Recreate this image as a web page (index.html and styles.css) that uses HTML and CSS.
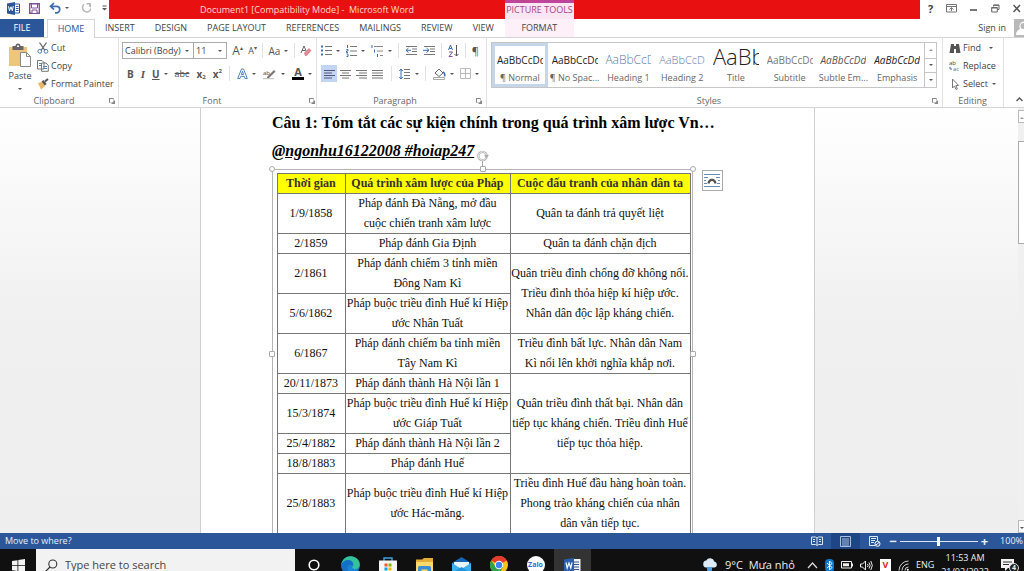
FILE: index.html
```html
<!DOCTYPE html>
<html lang="vi">
<head>
<meta charset="utf-8">
<title>Document1 [Compatibility Mode] - Microsoft Word</title>
<link rel="stylesheet" href="styles.css">
</head>
<body>
<header class="titlebar">
  <div class="quick">
    <svg class="word-logo" width="13" height="13" viewBox="0 0 13 13"><path d="M0 1.500 8 0v13L0 11.500z" fill="#2b579a"/><path d="M8 2h4.500v9H8" fill="#fff" stroke="#2b579a"/><path d="M9 4.500h2.500M9 6.500h2.500M9 8.500h2.500" stroke="#2b579a"/><path d="m1.500 4.300 1 4.400L4 4.800l1.300 3.900 1-4.700" fill="none" stroke="#fff"/></svg>
    <button class="icon-btn" aria-label="Save"><svg width="11" height="11" viewBox="0 0 11 11"><path d="M.7.7h9.600v9.600H.7z" fill="#fff" stroke="#80509a" stroke-width="1.400"/><path d="M2.500 1h6v4h-6zM3 7h5v3.500H3z" fill="#fff" stroke="#80509a"/></svg></button>
    <button class="icon-btn undo" aria-label="Undo"><svg width="12" height="12" viewBox="0 0 12 12"><path d="M5 1 1.500 4.300 5 7.500M2 4.300h5.500a3.200 3.200 0 0 1 0 6.500H6" fill="none" stroke="#3f6eb0" stroke-width="1.700"/></svg><span class="caret"></span></button>
    <button class="icon-btn redo" aria-label="Repeat"><svg width="11" height="12" viewBox="0 0 11 12"><path d="M6.500 1.700H10V5M9.500 2A4.400 4.400 0 1 1 4 2.300" fill="none" stroke="#b5b5b5" stroke-width="1.500"/></svg></button>
    <button class="icon-btn customize" aria-label="Customize"><svg width="5" height="6" viewBox="0 0 5 6"><path d="M.5 1h4" stroke="#555"/><path d="M0 3h5L2.500 5.500z" fill="#555"/></svg></button>
  </div>
  <div class="caption">Document1 [Compatibility Mode] -&nbsp; Microsoft Word</div>
  <div class="context-title">PICTURE TOOLS</div>
  <div class="caption-rest"></div>
  <div class="window-buttons">
    <button class="icon-btn help" aria-label="Help">?</button>
    <button class="icon-btn" aria-label="Ribbon options"><svg width="11" height="9" viewBox="0 0 11 9"><path d="M.5.5h10v7.500H.5zM.5 2.500h10M5.500 7V4M3.500 5.500l2-2 2 2" fill="none" stroke="#777"/></svg></button>
    <button class="icon-btn" aria-label="Minimize"><svg width="8" height="9" viewBox="0 0 8 9"><path d="M0 6h7" stroke="#555" stroke-width="1.600"/></svg></button>
    <button class="icon-btn" aria-label="Restore"><svg width="9" height="9" viewBox="0 0 9 9"><path d="M2.500 2.500V1H8v4.500H6.500M.7 3.500h5.600V8H.7zM.7 4h5.600M2.500 1.300H8" fill="none" stroke="#666"/></svg></button>
    <button class="icon-btn" aria-label="Close"><svg width="8" height="9" viewBox="0 0 8 9"><path d="m.5 1 6.500 7M7 1 .5 8" stroke="#555" stroke-width="1.500"/></svg></button>
  </div>
</header>

<nav class="tabs">
  <button class="tab file">FILE</button>
  <button class="tab active">HOME</button>
  <button class="tab">INSERT</button>
  <button class="tab">DESIGN</button>
  <button class="tab">PAGE LAYOUT</button>
  <button class="tab">REFERENCES</button>
  <button class="tab">MAILINGS</button>
  <button class="tab">REVIEW</button>
  <button class="tab">VIEW</button>
  <button class="tab format">FORMAT</button>
  <a class="signin" href="#">Sign in</a>
  <svg class="avatar" width="10" height="18" viewBox="0 0 10 18"><path d="M0 0h10v18H0z" fill="#b9b9b9"/><path d="M10 2.500a5 5 0 0 0-4 7.500C3.500 11 2 13 2 16h8z" fill="#fff"/><circle cx="9.500" cy="7" r="3" fill="#b9b9b9"/></svg>
</nav>

<section class="ribbon">
  <div class="group clipboard">
    <div class="clip-body">
      <button class="paste"><svg width="24" height="25" viewBox="0 0 24 25"><path d="M1 4h18v19H1z" fill="#edc67c"/><path d="M4.500 3h3a2.500 2.500 0 0 1 5 0h3v4h-11z" fill="#666"/><path d="M9 2.500h2v1.500H9z" fill="#fff"/><path d="M12.500 9.500h6l4 4v10h-10z" fill="#fff" stroke="#888"/><path d="M18.500 9.500v4h4" fill="none" stroke="#888"/></svg><span>Paste</span><span class="caret"></span></button>
      <div class="clip-list">
        <button class="cmd"><svg width="12" height="12" viewBox="0 0 12 12"><path d="m2.500.5 5.500 8M9.500.5 4 8.500" stroke="#666" stroke-width="1.300"/><circle cx="2.800" cy="9.300" r="1.900" fill="none" stroke="#4f7cb8"/><circle cx="9" cy="9.300" r="1.900" fill="none" stroke="#4f7cb8"/></svg>Cut</button>
        <button class="cmd"><svg width="12" height="12" viewBox="0 0 12 12"><path d="M.5.500h4.500l2 2V9H.5zM4.500 3h4.500l2.300 2.300v6H4.500z" fill="#fff" stroke="#777"/><path d="M2 3.500h2M2 5.500h2M6 6.500h4M6 8.500h4" stroke="#5a86bd"/></svg>Copy</button>
        <button class="cmd"><svg width="12" height="12" viewBox="0 0 12 12"><path d="m1 5 4-1 3 4-4 3.500z" fill="#e9b765"/><path d="m4.500 3.500 2-1.500 3.200 4-2 1.500z" fill="#555"/><path d="m8 3.500 3-2.500" stroke="#555" stroke-width="2"/></svg>Format Painter</button>
      </div>
    </div>
    <div class="group-label">Clipboard<i class="launcher"></i></div>
  </div>

  <div class="group font">
    <div class="tool-row">
      <div class="combos"><label class="combo name"><select aria-label="Font"><option>Calibri (Body)</option></select><span class="caret"></span></label><label class="combo size"><select aria-label="Font size"><option>11</option></select><span class="caret"></span></label></div>
      <button class="tool big">A<sup>▴</sup></button>
      <button class="tool">A<sup>▾</sup></button>
      <i class="sep"></i>
      <button class="tool case">Aa<span class="caret"></span></button>
      <i class="sep"></i>
      <button class="tool" aria-label="Clear formatting"><svg width="12" height="12" viewBox="0 0 12 12"><path d="m1 8 3-7 2.500 6M2 5.500h3.500" fill="none" stroke="#666"/><path d="m4 8 5-5 2.500 2.500-5 5.500H5z" fill="#e08a98"/></svg></button>
    </div>
    <div class="tool-row second">
      <button class="tool b">B</button>
      <button class="tool i">I</button>
      <button class="tool u"><u>U</u><span class="caret"></span></button>
      <button class="tool s"><s>abc</s></button>
      <button class="tool x">x<sub>2</sub></button>
      <button class="tool x">x<sup>2</sup></button>
      <i class="sep"></i>
      <button class="tool effect"><svg width="11" height="12" viewBox="0 0 11 12"><path d="M.7 10.500 4.500 1h2l3.800 9.500H8l-.8-2.200H3.700L3 10.500zM4.300 6.500h2.300L5.500 3.300z" fill="#fff" stroke="#4d86c4"/></svg><span class="caret"></span></button>
      <button class="tool hilite" aria-label="Highlight"><svg width="14" height="12" viewBox="0 0 14 12"><text x="0" y="7" class="tiny">ab</text><path d="m4 9 7-7 1.500 1.500L6 10H4z" fill="#777"/><path d="M0 10.700h11" stroke="#bbb"/></svg><span class="caret"></span></button>
      <button class="tool color"><span class="glyph">A</span><span class="caret"></span></button>
    </div>
    <div class="group-label">Font<i class="launcher"></i></div>
  </div>

  <div class="group paragraph">
    <div class="tool-row">
      <button class="tool"><svg width="11" height="11" viewBox="0 0 11 11"><path d="M4 1.500h7M4 5.500h7M4 9.500h7" stroke="#777"/><path d="M0 1.500h2M0 5.500h2M0 9.500h2" stroke="#3b6fb0" stroke-width="2"/></svg><span class="caret"></span></button>
      <button class="tool"><svg width="11" height="12" viewBox="0 0 11 12"><path d="M4 1.500h7M4 6h7M4 10.500h7" stroke="#777"/><path d="M1.500 0v3M.5 4.500h1.500V6H.5v1.500H2M.5 9h1.500v2.500H.5" fill="none" stroke="#3b6fb0"/></svg><span class="caret"></span></button>
      <button class="tool"><svg width="13" height="12" viewBox="0 0 13 12"><path d="M3 1.500h9M6 6h6M9 10.500h3" stroke="#888"/><path d="M1 0v3M3.500 4.500v3M6.500 9v3" stroke="#3b6fb0"/></svg><span class="caret"></span></button>
      <i class="sep"></i>
      <button class="tool"><svg width="12" height="11" viewBox="0 0 12 11"><path d="M1 1.500h11M7 4h5M7 6.500h5M1 9.500h11" stroke="#777"/><path d="M3.500 3 1 5.300l2.500 2.200M1 5.300h5" fill="none" stroke="#3b6fb0"/></svg></button>
      <button class="tool"><svg width="12" height="11" viewBox="0 0 12 11"><path d="M1 1.500h11M7 4h5M7 6.500h5M1 9.500h11" stroke="#777"/><path d="m3.500 3 2.500 2.300-2.500 2.200M0 5.300h6" fill="none" stroke="#3b6fb0"/></svg></button>
      <i class="sep"></i>
      <button class="tool" aria-label="Sort"><svg width="11" height="12" viewBox="0 0 11 12"><path d="M.5 5 2.500 0l2 5M1.200 3.500h2.600" fill="none" stroke="#3b6fb0"/><path d="M1 7h3.500L1 11.500h3.500" fill="none" stroke="#80509a"/><path d="M8.500 0v11M6.500 9l2 2 2-2" fill="none" stroke="#555"/></svg></button>
      <i class="sep"></i>
      <button class="tool pilcrow">¶</button>
    </div>
    <div class="tool-row second">
      <div class="aligns">
      <button class="tool align on" aria-label="Align left"><svg width="11" height="10" viewBox="0 0 11 10"><path d="M0 1.500h11M0 4h8M0 6.500h11M0 9h8" stroke="#557"/></svg></button>
      <button class="tool align" aria-label="Center"><svg width="11" height="10" viewBox="0 0 11 10"><path d="M0 1.500h11M2 4h7M0 6.500h11M2 9h7" stroke="#777"/></svg></button>
      <button class="tool align" aria-label="Align right"><svg width="11" height="10" viewBox="0 0 11 10"><path d="M0 1.500h11M3 4h8M0 6.500h11M3 9h8" stroke="#777"/></svg></button>
      <button class="tool align" aria-label="Justify"><svg width="11" height="10" viewBox="0 0 11 10"><path d="M0 1.500h11M0 4h11M0 6.500h11M0 9h11" stroke="#777"/></svg></button>
      </div>
      <i class="sep"></i>
      <button class="tool"><svg width="12" height="12" viewBox="0 0 12 12"><path d="M5 1.500h6M5 4.500h6M5 7.500h6M5 10.500h6" stroke="#777"/><path d="M2 1v10M.3 3 2 1l1.700 2M.3 9 2 11l1.700-2" fill="none" stroke="#3b6fb0"/></svg><span class="caret"></span></button>
      <i class="sep"></i>
      <button class="tool" aria-label="Shading"><svg width="13" height="12" viewBox="0 0 13 12"><path d="m2 5 4-4 4 4-4 3.500z" fill="#fff" stroke="#666"/><path d="M10 4c2 1 2 3 1.500 4.500" fill="none" stroke="#3b6fb0" stroke-width="1.500"/><path d="M.5 9.500h11v2H.5z" fill="#fff" stroke="#aaa"/></svg><span class="caret"></span></button>
      <button class="tool" aria-label="Borders"><svg width="11" height="11" viewBox="0 0 11 11"><path d="M.5.5h10v10H.5zM5.500.5v10M.5 5.500h10" fill="none" stroke="#bbb"/></svg><span class="caret"></span></button>
    </div>
    <div class="group-label">Paragraph<i class="launcher"></i></div>
  </div>

  <div class="group styles">
    <div class="gallery">
      <button class="style on"><span class="preview">AaBbCcDd</span><span>¶ Normal</span></button>
      <button class="style"><span class="preview">AaBbCcDd</span><span>¶ No Spac...</span></button>
      <button class="style"><span class="preview h1">AaBbCcDd</span><span>Heading 1</span></button>
      <button class="style"><span class="preview h2">AaBbCcDd</span><span>Heading 2</span></button>
      <button class="style"><span class="preview title">AaBb</span><span>Title</span></button>
      <button class="style"><span class="preview sub">AaBbCcDd</span><span>Subtitle</span></button>
      <button class="style"><span class="preview subtle">AaBbCcDd</span><span>Subtle Em...</span></button>
      <button class="style"><span class="preview em">AaBbCcDd</span><span>Emphasis</span></button>
      <div class="gallery-scroll"><button aria-label="Up"><i class="caret up"></i></button><button aria-label="Down"><i class="caret"></i></button><button aria-label="More"><i class="caret more"></i></button></div>
    </div>
    <div class="group-label">Styles<i class="launcher"></i></div>
  </div>

  <div class="group editing">
    <div class="edit-list">
      <button class="cmd"><svg width="12" height="11" viewBox="0 0 12 11"><path d="M2 1h3v2h2V1h3l1.500 9H7V6H5v4H.5z" fill="#555"/></svg>Find<span class="caret far"></span></button>
      <button class="cmd"><svg width="12" height="12" viewBox="0 0 12 12"><text x="0" y="5" class="tiny">ab</text><text x="4" y="11" class="tiny blue">ac</text><path d="M1 7v2h2" fill="none" stroke="#3b6fb0"/></svg>Replace</button>
      <button class="cmd"><svg width="12" height="12" viewBox="0 0 12 12"><path d="M3.500 1v9l2-2 1.500 3.500 1.300-.6L6.900 7.500h2.800z" fill="#fff" stroke="#777"/></svg>Select<span class="caret"></span></button>
    </div>
    <div class="group-label">Editing</div>
  </div>
  <button class="collapse" aria-label="Collapse the ribbon"><svg width="7" height="5" viewBox="0 0 7 5"><path d="m.5 4 3-3 3 3" fill="none" stroke="#555" stroke-width="1.400"/></svg></button>
</section>

<main class="workspace">
  <div class="desk">
    <article class="page">
      <h1>Câu 1: Tóm tắt các sự kiện chính trong quá trình xâm lược Vn…</h1>
      <p class="tag">@ngonhu16122008 #hoiap247</p>
      <div class="frame">
        <i class="handle tl"></i><i class="handle tc"></i><i class="handle tr"></i><i class="handle ml"></i><i class="handle mr"></i>
        <svg class="rotate" width="13" height="17" viewBox="0 0 13 17"><path d="M6.500 11v6" stroke="#aaa"/><circle cx="6.500" cy="6" r="4.200" fill="#fff" stroke="#aaa" stroke-width="2.200"/><circle cx="6.500" cy="6" r="4.200" fill="none" stroke="#fff" stroke-width=".8"/><path d="M8 5h5l-2.500 3z" fill="#aaa"/></svg>
        <button class="layout-options" aria-label="Layout options"><svg width="16" height="15" viewBox="0 0 16 15"><path d="M0 1.500h16M0 4.500h4M12 4.500h4M0 7.500h2M14 7.500h2M0 10.500h3M13 10.500h3M0 13.500h16" stroke="#6b8db5"/><path d="M3.500 10.500c0-6.500 9-6.500 9 0h-2.300c0-3.400-4.400-3.400-4.400 0z" fill="#555"/></svg></button>
        <table class="events">
          <thead><tr><th class="c1">Thời gian</th><th class="c2">Quá trình xâm lược của Pháp</th><th>Cuộc đấu tranh của nhân dân ta</th></tr></thead>
          <tbody>
            <tr><td>1/9/1858</td><td>Pháp đánh Đà Nẵng, mở đầu<br>cuộc chiến tranh xâm lược</td><td>Quân ta đánh trả quyết liệt</td></tr>
            <tr><td>2/1859</td><td>Pháp đánh Gia Định</td><td>Quân ta đánh chặn địch</td></tr>
            <tr><td>2/1861</td><td>Pháp đánh chiếm 3 tỉnh miền<br>Đông Nam Kì</td><td rowspan="2">Quân triều đình chống đỡ không nổi.<br>Triều đình thỏa hiệp kí hiệp ước.<br>Nhân dân độc lập kháng chiến.</td></tr>
            <tr><td>5/6/1862</td><td>Pháp buộc triều đình Huế kí Hiệp<br>ước Nhân Tuất</td></tr>
            <tr><td>6/1867</td><td>Pháp đánh chiếm ba tỉnh miền<br>Tây Nam Kì</td><td>Triều đình bất lực. Nhân dân Nam<br>Kì nổi lên khởi nghĩa khắp nơi.</td></tr>
            <tr><td>20/11/1873</td><td>Pháp đánh thành Hà Nội lần 1</td><td rowspan="4">Quân triều đình thất bại. Nhân dân<br>tiếp tục kháng chiến. Triều đình Huế<br>tiếp tục thỏa hiệp.</td></tr>
            <tr><td>15/3/1874</td><td>Pháp buộc triều đình Huế kí Hiệp<br>ước Giáp Tuất</td></tr>
            <tr><td>25/4/1882</td><td>Pháp đánh thành Hà Nội lần 2</td></tr>
            <tr><td>18/8/1883</td><td>Pháp đánh Huế</td></tr>
            <tr><td>25/8/1883</td><td>Pháp buộc triều đình Huế kí Hiệp<br>ước Hác-măng.</td><td>Triều đình Huế đầu hàng hoàn toàn.<br>Phong trào kháng chiến của nhân<br>dân vẫn tiếp tục.</td></tr>
          </tbody>
        </table>
      </div>
    </article>
  </div>
  <div class="scrollbar"><i class="arrow"><b class="caret up"></b></i><i class="thumb"></i><i class="arrow end"><b class="caret"></b></i></div>
</main>

<footer class="status">
  <span>Move to where?</span>
  <div class="views">
    <button class="view" aria-label="Read mode"><svg width="12" height="10" viewBox="0 0 12 10"><path d="M.5 1h4l1.500 1 1.500-1h4v7.500h-4L6 9.500 4.500 8.500h-4zM6 2v7" fill="none" stroke="#dce6f5"/><path d="M2 3.500h2M2 5.500h2M8 3.500h2M8 5.500h2" stroke="#dce6f5"/></svg></button>
    <button class="view on" aria-label="Print layout"><svg width="11" height="11" viewBox="0 0 11 11"><path d="M.5.5h10v10H.5zM2 3h7M2 5h7M2 7h7M2 9h7" fill="none" stroke="#a9bfe0"/></svg></button>
    <button class="view" aria-label="Web layout"><svg width="12" height="11" viewBox="0 0 12 11"><path d="M6 9.500H.5v-9h8V5M2 2.500h5M2 4.500h4M2 6.500h3" fill="none" stroke="#dce6f5"/><circle cx="8.500" cy="7.800" r="2.500" fill="#2b579a" stroke="#fff"/><path d="m7 9 3-2.500" stroke="#fff"/></svg></button>
  </div>
  <div class="zoom"><button aria-label="Zoom out">−</button><input type="range" min="10" max="190" value="100" aria-label="Zoom"><button aria-label="Zoom in">+</button><span>100%</span></div>
</footer>

<div class="taskbar">
  <div class="task-inner">
    <button class="start" aria-label="Start"><svg width="13" height="13" viewBox="0 0 13 13"><path d="m0 2 5.500-.8v5H0zM6.300 1 13 0v6.200H6.300zM0 7h5.500v5L0 11.200zM6.300 7H13v6l-6.700-.9z" fill="#f2f2f2"/></svg></button>
    <label class="search"><svg width="13" height="13" viewBox="0 0 13 13"><circle cx="7.800" cy="5" r="4" fill="none" stroke="#333" stroke-width="1.100"/><path d="M5 8 .5 12.500" stroke="#333" stroke-width="1.200"/></svg><input type="text" placeholder="Type here to search" aria-label="Search"></label>
    <div class="apps">
      <button class="app" aria-label="Cortana"><svg width="12" height="12" viewBox="0 0 12 12"><circle cx="6" cy="6" r="4.800" fill="none" stroke="#fff" stroke-width="1.600"/></svg></button>
      <button class="app" aria-label="Edge"><svg width="19" height="19" viewBox="0 0 19 19"><circle cx="9.500" cy="9.500" r="9.300" fill="#1784d6"/><path d="M.3 8.500C1 3.500 5 .2 9.500.2c5.500 0 9.300 4 9.300 8 0 3-2 4.800-4.800 4.800-2.300 0-3.200-1-2.500-2.200C13 8 10.500 5.500 7.500 5.500 4 5.500 1.500 7 .3 8.500z" fill="#35c19a"/><path d="M.3 8.500C1.500 5 5 3.500 8 4c3 .5 5 3 4 6-2-2-5-1.500-5.500 1S8 17 12 17C6 20 0 16 .3 8.500z" fill="#1370c4"/></svg></button>
      <button class="app" aria-label="Store"><svg width="18" height="17" viewBox="0 0 18 17"><path d="M5 4V1h8v3" fill="none" stroke="#3aa2e8" stroke-width="1.400"/><path d="M0 3.500h18V15a2 2 0 0 1-2 2H2a2 2 0 0 1-2-2z" fill="#f5f5f5"/><path d="M5.500 6.500h3v3h-3z" fill="#ef5a2b"/><path d="M9.500 6.500h3v3h-3z" fill="#7fba00"/><path d="M5.500 10.500h3v3h-3z" fill="#00a4ef"/><path d="M9.500 10.500h3v3h-3z" fill="#ffb900"/></svg></button>
      <button class="app" aria-label="File Explorer"><svg width="17" height="15" viewBox="0 0 17 15"><path d="M0 1.500h6l2-1.500h9v14H0z" fill="#e4ad35"/><path d="M0 4h17v10H0z" fill="#ffd96b"/><path d="M2 15V9.500q0-1.500 1.500-1.500h10q1.500 0 1.500 1.500V15h-3.500v-3.500h-6V15z" fill="#3c8fd4"/></svg></button>
      <button class="app" aria-label="Mail"><svg width="19" height="16" viewBox="0 0 19 16"><path d="M0 6 9.500 0 19 6v10H0z" fill="#1565b4"/><path d="M2 5h15v6H2z" fill="#e8f4fc"/><path d="m0 6 9.500 6L19 6v10H0z" fill="#3cb1ee"/><path d="m0 16 9.500-6 9.500 6z" fill="#2193dc"/></svg></button>
      <button class="app" aria-label="Chrome"><svg width="18" height="18" viewBox="0 0 18 18"><circle cx="9" cy="9" r="9" fill="#fbc116"/><path d="M9 9 1.200 4.500A9 9 0 0 1 16.800 4.500z" fill="#e33b2e"/><path d="M1.200 4.500A9 9 0 0 0 9 18l4-7H6z" fill="#30a14d"/><path d="M9 4.500h7.800" stroke="#e33b2e"/><circle cx="9" cy="9" r="4.200" fill="#fff"/><circle cx="9" cy="9" r="3.200" fill="#3f83ee"/></svg></button>
      <button class="app" aria-label="Zalo"><span class="zalo">Zalo</span></button>
      <button class="app current" aria-label="Word"><svg width="17" height="15" viewBox="0 0 17 15"><path d="M7 1h9.500v13H7z" fill="#f4f4f4"/><path d="M10 4h5M10 6.500h5M10 9h5M10 11.500h5" stroke="#2b579a"/><path d="M0 1.500 10 0v15L0 13.500z" fill="#2b5fae"/><path d="m2 4.500 1.200 5.500L5 5l1.800 5L8 4.500" fill="none" stroke="#fff" stroke-width="1.200"/></svg></button>
    </div>
    <div class="tray">
      <span class="weather"><svg width="16" height="14" viewBox="0 0 16 14"><path d="M4 9.500a3.500 3.500 0 0 1 .3-6.900 4.300 4.300 0 0 1 8 1A3 3 0 0 1 12.500 9.500z" fill="#dcebf7"/><path d="M5 9h5v2.500a2.500 2 0 0 1-5 0z" fill="#4aa0e8"/></svg>9°C&nbsp; Mưa nhỏ</span>
      <svg width="11" height="8" viewBox="0 0 11 8"><path d="m1 7 4.500-5L10 7" fill="none" stroke="#ddd" stroke-width="1.200"/></svg>
      <svg width="9" height="13" viewBox="0 0 9 13"><rect width="9" height="13" rx="4" fill="#0b78d0"/><path d="m2 4 5 4.500L4.500 11V2L7 4.500 2 9" fill="none" stroke="#fff"/></svg>
      <svg width="12" height="8" viewBox="0 0 12 8"><path d="M.5.5h10v6.500H.5z" fill="none" stroke="#eee"/><path d="M2 2.200h6v3H2zM11 2.500h1v3h-1z" fill="#eee"/></svg>
      <svg width="13" height="11" viewBox="0 0 13 11"><path d="M.5 4h2L5.500 1v9l-3-3h-2zM7.500 4q1.200 1.500 0 3M9 2.500q2.300 3 0 6M10.800 1q3 4.500 0 9" fill="none" stroke="#eee"/></svg>
      <span class="unikey">V</span>
      <svg width="11" height="11" viewBox="0 0 11 11"><path d="M1 10.500A9.500 9.500 0 0 1 10.500 1M4 10.500A6.500 6.500 0 0 1 10.500 4M7 10.500A3.500 3.500 0 0 1 10.500 7" fill="none" stroke="#ccc"/><circle cx="9.800" cy="9.800" r="1" fill="#fff"/></svg>
      <span>ENG</span>
      <time class="clock">11:53 AM<br>21/02/2022</time>
      <span class="notice"><svg width="14" height="13" viewBox="0 0 14 13"><path d="M0 0h13v9H7l-3 3V9H0z" fill="#f2f2f2"/><path d="M2 3h9M2 5.500h6" stroke="#333"/></svg><b>4</b></span>
    </div>
  </div>
</div>
</body>
</html>
```
FILE: styles.css
```css
* { box-sizing: border-box; }
body {
  margin: 0;
  height: 100vh;
  overflow: hidden;
  display: flex;
  flex-direction: column;
  background: #fff;
  color: #444;
  font: 9px/12px "Open Sans", "Noto Sans", sans-serif;
}
button, select, input { font: inherit; color: inherit; margin: 0; }
button { border: 0; padding: 0; background: none; display: flex; align-items: center; white-space: nowrap; }
svg { display: block; flex: none; }
i { font-style: normal; }
.caret { display: inline-block; flex: none; width: 0; height: 0; border: 2px solid transparent; border-top-color: #555; border-bottom: 0; margin-left: 4px; }
.caret.up { border-top: 0; border-bottom: 2px solid #999; }

.titlebar { display: flex; height: 19px; flex: none; }
.quick { width: 109px; display: flex; align-items: center; padding: 0 2px 3px 7px; gap: 9px; flex: none; }
.quick .redo { margin-left: 2px; }
.quick .customize { margin-left: auto; }
.caption { width: 396px; flex: none; background: #e81010; color: #ffd9d0; text-align: center; line-height: 19px; }
.context-title { width: 69px; flex: none; background: #fbe6f3; border-top: 3px solid #c0449a; color: #a8448c; text-align: center; line-height: 14px; white-space: nowrap; }
.caption-rest { flex: 1; background: #e81010; }
.window-buttons { width: 104px; display: flex; align-items: center; padding: 0 0 2px 8px; gap: 13px; flex: none; }
.help { font-weight: 700; font-size: 11px; }

.tabs { display: flex; height: 19px; flex: none; border-bottom: 1px solid #d5d5d5; }
.tab { padding: 0 10px; justify-content: center; }
.tab.file { width: 44px; background: #2b579a; color: #fff; margin-right: 3px; }
.tab.active { width: 48px; border: 1px solid #d5d5d5; border-bottom: 0; background: #fff; color: #2b579a; height: 19px; }
.tab.format { width: 69px; background: #fdf0f8; margin-left: 1px; }
.signin { margin-left: auto; margin-right: 8px; color: #444; text-decoration: none; line-height: 18px; white-space: nowrap; }

.ribbon { display: flex; height: 70px; flex: none; border-bottom: 1px solid #d5d5d5; }
.group { display: flex; flex-direction: column; border-right: 1px solid #e2e2e2; padding: 4px 4px 0; flex: none; }
.group-label { margin-top: auto; height: 13px; line-height: 13px; padding-right: 10px; text-align: center; color: #666; position: relative; }
.launcher { position: absolute; right: 0; bottom: 4px; width: 5px; height: 5px; border: 1px solid #888; border-right-color: #ccc; border-bottom-color: #ccc; }
.launcher::after { content: ""; position: absolute; right: -2px; bottom: -2px; border: 2px solid #888; border-top-color: transparent; border-left-color: transparent; }
.clipboard { width: 119px; }
.clip-body { display: flex; gap: 5px; }
.paste { flex-direction: column; width: 28px; padding: 1px 0 0 4px; gap: 2px; }
.paste .caret { margin: 4px 0 0; }
.clip-list, .edit-list { display: flex; flex-direction: column; gap: 6px; }
.cmd { gap: 2px; height: 12px; }
.cmd .caret { margin-left: 2px; }
.cmd .caret.far { margin-left: 6px; }

.font { width: 198px; padding-left: 3px; }
.tool-row { display: flex; align-items: center; height: 17px; justify-content: space-between; }
.tool-row.second { margin-top: 6px; }
.tool { color: #555; }
.tool .caret { margin-left: 4px; }
.tool.big { font-size: 12px; }
.tool.case { font-size: 10px; }
.tool.pilcrow { font-size: 11px; }
.tool sup, .tool sub { font-size: 6px; line-height: 6px; }
.tool sup { align-self: flex-start; }
.tool sub { align-self: flex-end; }
.tool.b, .tool.u, .tool.x { font-weight: 700; font-size: 10px; }
.tool.b { margin-left: 5px; }
.tool.i { font: italic 700 11px "Liberation Serif", serif; }
.glyph { width: 12px; font-size: 11px; font-weight: 700; line-height: 10px; border-bottom: 3px solid #000; }
.sep { width: 1px; height: 15px; background: #e2e2e2; }
.combos { display: flex; }
.combo { display: flex; align-items: center; height: 17px; border: 1px solid #ababab; padding-right: 4px; }
.combo.name { width: 72px; }
.combo.size { width: 33px; border-left: 0; }
.combo select { appearance: none; border: 0; background: none; padding: 0 0 0 2px; flex: 1; min-width: 0; height: 15px; }
.combo .caret { margin: 0; }
.tiny { font: 6px "Open Sans", sans-serif; fill: #444; }
.tiny.blue { fill: #3b6fb0; }

.paragraph { width: 170px; padding: 4px 7px 0 4px; }
.aligns { display: flex; }
.align { width: 16px; height: 17px; justify-content: center; }
.align.on { background: #c2d5f2; }
.paragraph .launcher, .font .launcher { right: -2px; }

.styles { flex: 1; padding-right: 5px; }
.gallery { display: flex; height: 46px; border: 1px solid #c6c6c6; }
.style { flex: 1 1 0; min-width: 0; flex-direction: column; justify-content: flex-end; overflow: hidden; padding: 0 2px 3px; color: #666; }
.style.on { border: 3px solid #c5d5ea; padding: 0; }
.preview { width: 46px; overflow: hidden; height: 22px; line-height: 20px; color: #222; text-align: left; font-size: 10px; }
.preview.h1 { color: #5b7ba8; font-size: 12px; font-weight: 300; }
.preview.h2 { color: #5b7ba8; font-size: 11px; font-weight: 300; }
.preview.title { font-size: 22px; font-weight: 300; height: 28px; line-height: 24px; }
.preview.sub { color: #777; }
.preview.subtle { color: #555; font-style: italic; }
.preview.em { font-style: italic; }
.gallery-scroll { width: 12px; flex: none; display: grid; grid-template-rows: repeat(3, 1fr); border-left: 1px solid #c6c6c6; }
.gallery-scroll button { justify-content: center; }
.gallery-scroll button + button { border-top: 1px solid #c6c6c6; }
.gallery-scroll .caret { margin: 0; }
.gallery-scroll .more { box-shadow: 0 -3px 0 -1px #777; }
.editing { width: 61px; padding-left: 6px; }
.editing .group-label { padding-right: 3px; }
.collapse { width: 20px; flex: none; align-self: flex-end; padding: 0 0 5px 12px; }

.workspace { flex: 1; min-height: 0; display: flex; }
.desk { flex: 1; display: flex; justify-content: center; overflow: hidden; padding-right: 3px; background: linear-gradient(#fff, #f0f0f0 50%, #eee); }
.page { width: 60.6%; background: #fff; border: solid #d0d0d0; border-width: 0 1px; padding: 1px 0 0 71px; color: #111; font-family: "Liberation Serif", "Times New Roman", serif; }
.page h1 { margin: 0; font-size: 16px; line-height: 28px; white-space: nowrap; color: #000; }
.page .tag { margin: 0; font-size: 16px; line-height: 28px; font-weight: 700; font-style: italic; color: #000; text-decoration: underline; }
.frame { width: 421px; margin-top: 4px; border: 1px solid #b5b5b5; border-bottom: 0; padding: 3px 2px 0 4px; position: relative; }
.handle { position: absolute; width: 6px; height: 6px; border: 1px solid #aaa; background: #fff; border-radius: 50%; }
.tl { left: -4px; top: -4px; }
.tc { left: 207px; top: -4px; border-radius: 1px; }
.tr { right: -4px; top: -4px; }
.ml { left: -4px; top: 181px; border-radius: 1px; }
.mr { right: -4px; top: 181px; border-radius: 1px; }
.rotate { position: absolute; left: 203px; top: -20px; }
.layout-options { position: absolute; left: 429px; top: 0; width: 21px; height: 21px; border: 1px solid #aaa; background: #fff; justify-content: center; }
.events { width: 100%; border-collapse: separate; border-spacing: 0; font-size: 12px; line-height: 20px; text-align: center; table-layout: fixed; box-shadow: 1px 0 0 #777; }
.events th, .events td { padding: 0; box-shadow: inset 1px 1px 0 #777; white-space: nowrap; }
.events th { background: #ff0; color: #333; }
.c1 { width: 68px; }
.c2 { width: 165px; }

.scrollbar { width: 6px; flex: none; background: #f0f0f0; display: flex; flex-direction: column; overflow: hidden; }
.arrow { height: 13px; border: 1px solid #bbb; background: #fff; padding: 3px 0 0; margin: 2px -6px 0 0; line-height: 4px; }
.arrow .caret { margin-left: 1px; }
.arrow.end { margin-top: auto; }
.thumb { height: 103px; margin: 18px -6px 0 0; border: 1px solid #aaa; background: #fff; }

.status { height: 16px; flex: none; display: flex; align-items: center; background: #2b579a; color: #e8effa; padding-left: 5px; }
.views { margin-left: auto; display: flex; }
.view { width: 29px; height: 16px; justify-content: center; }
.view.on { background: #1e4585; }
.zoom { display: flex; align-items: center; gap: 3px; }
.zoom button { font-size: 13px; font-weight: 700; }
.zoom input { appearance: none; width: 78px; height: 10px; background: linear-gradient(#dce6f5, #dce6f5) 0 50% / 100% 1px no-repeat; }
.zoom input::-webkit-slider-thumb { appearance: none; width: 3px; height: 9px; background: #fff; }
.zoom span { margin-left: 9px; padding-right: 1px; white-space: nowrap; }

.taskbar { height: 22px; flex: none; overflow: hidden; background: #101010; }
.task-inner { height: 32px; display: flex; color: #eee; }
.start { width: 36px; justify-content: center; padding-right: 1px; }
.start { padding: 0; }
.search { width: 259px; flex: none; display: flex; align-items: center; background: #f2f2f2; color: #333; padding-left: 9px; gap: 7px; }
.search input { border: 0; background: none; padding: 0; font-size: 11px; outline: 0; flex: 1; min-width: 0; }
.search input::placeholder { color: #444; opacity: 1; }
.apps { display: flex; }
.app { width: 37px; justify-content: center; }
.app.current { background: #333; }
.zalo { width: 18px; height: 18px; border-radius: 50%; background: #fff; color: #1a72d8; font-size: 7px; line-height: 17px; font-weight: 700; text-align: center; }
.tray { margin-left: auto; display: flex; align-items: center; gap: 7px; font-size: 9px; white-space: nowrap; padding-right: 9px; }
.weather { display: flex; align-items: center; gap: 7px; font-size: 11px; margin-right: 5px; }
.unikey { width: 11px; height: 12px; background: #fff; color: #d22; font-weight: 700; text-align: center; line-height: 12px; }
.clock { text-align: center; line-height: 14px; }
.notice { position: relative; margin-left: 5px; }
.notice b { position: absolute; left: 8px; top: 4px; width: 10px; height: 10px; border: 1px solid #ddd; border-radius: 50%; background: #222; font-size: 7px; line-height: 8px; text-align: center; }
```
